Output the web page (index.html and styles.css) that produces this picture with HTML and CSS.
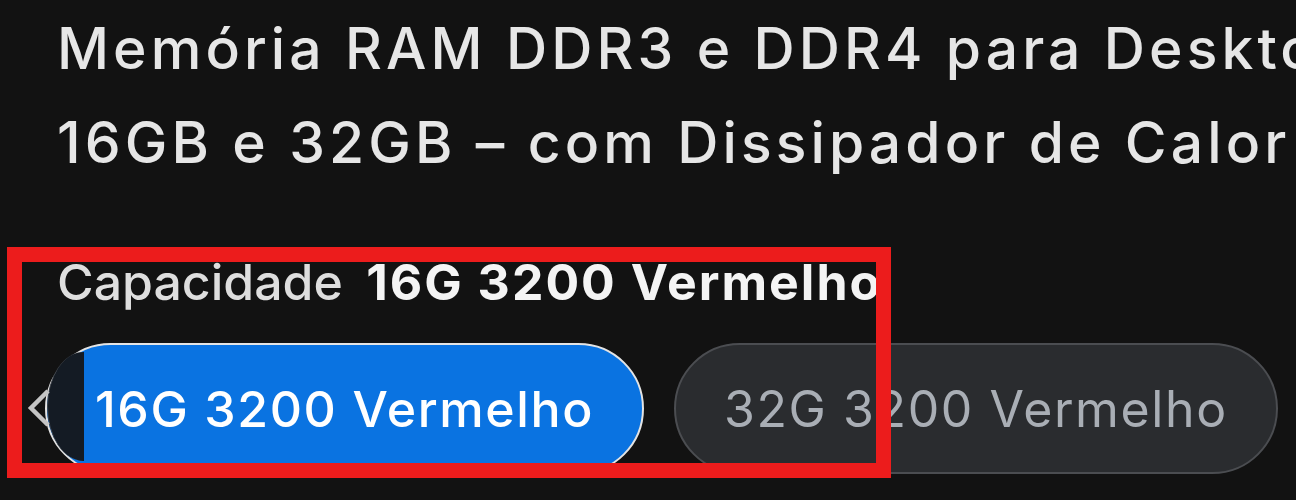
FILE: index.html
```html
<!DOCTYPE html>
<html lang="pt-BR">
<head>
    <meta charset="UTF-8">
    <meta name="viewport" content="width=device-width, initial-scale=1.0">
    <title>Memória RAM DDR3 e DDR4</title>
    <link rel="stylesheet" href="styles.css">
</head>
<body>
    <div class="product">
        <h1 class="product-title">Memória RAM DDR3 e DDR4 para Desktop 8GB,<br>16GB e 32GB – com Dissipador de Calor</h1>

        <div class="variant">
            <p class="variant-label">Capacidade <strong>16G 3200 Vermelho</strong></p>

            <div class="variant-options">
                <button class="scroll-btn" type="button" aria-label="Anterior">
                    <svg width="26" height="40" viewBox="0 0 26 40">
                        <polyline points="22,3 5,20 22,37" fill="none" stroke="#c4c4c4" stroke-width="4.5"/>
                    </svg>
                </button>
                <button class="option selected" type="button">16G 3200 Vermelho</button>
                <button class="option" type="button">32G 3200 Vermelho</button>
            </div>
        </div>
    </div>

    <div class="highlight"></div>
</body>
</html>
```

FILE: styles.css
```css
body {
    margin: 0;
    padding: 0;
    background-color: #121212;
    font-family: 'Inter', 'Noto Sans', sans-serif;
    overflow: hidden;
    height: 500px;
}

.product {
    padding-left: 57px;
}

.product-title {
    margin: 2px 0 0 0;
    font-size: 57px;
    line-height: 94px;
    font-weight: 500;
    letter-spacing: 4.1px;
    color: #e6e6e6;
    white-space: nowrap;
}

.variant {
    margin-top: 62px;
}

.variant-label {
    margin: 0;
    font-size: 50px;
    line-height: 60px;
    font-weight: 500;
    color: #dedede;
    white-space: nowrap;
}

.variant-label strong {
    margin-left: 10px;
    font-weight: 700;
    letter-spacing: 2px;
    color: #f4f4f4;
}

.variant-options {
    position: relative;
    display: flex;
    gap: 30px;
    margin-top: 31px;
    margin-left: -12px;
}

.option {
    height: 131px;
    padding: 0 48px;
    border-radius: 66px;
    border: 2px solid #4b4d51;
    background-color: #2a2c2f;
    color: #a9aeb5;
    font-family: inherit;
    font-size: 50px;
    font-weight: 400;
    letter-spacing: 1.6px;
    white-space: nowrap;
    cursor: pointer;
}

.option.selected {
    background-color: #0a73e1;
    border-color: #e4e4e4;
    color: #fff;
    font-weight: 500;
    letter-spacing: 1.6px;
}

.scroll-btn {
    position: absolute;
    left: -29px;
    top: 0;
    width: 69px;
    height: 131px;
    padding: 0;
    border: none;
    background: none;
    cursor: pointer;
}

.scroll-btn::before {
    content: "";
    position: absolute;
    left: 31px;
    top: 9px;
    width: 37px;
    height: 109px;
    background-color: #141b24;
    border-left: 1px solid #3c4148;
    border-radius: 37px 0 0 37px / 55px 0 0 55px;
    box-sizing: border-box;
}

.scroll-btn svg {
    position: absolute;
    left: 10px;
    top: 45px;
}

.highlight {
    position: absolute;
    left: 7px;
    top: 247px;
    width: 884px;
    height: 231px;
    border: 15px solid #ec1c1c;
    box-sizing: border-box;
    pointer-events: none;
}
```
